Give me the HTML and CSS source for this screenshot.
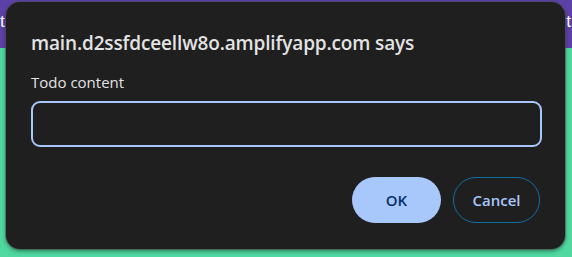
FILE: index.html
```html
<!DOCTYPE html>
<html>
<head>
<meta charset="utf-8">
<link rel="stylesheet" href="styles.css">
</head>
<body>
<div class="page">
  <header class="topbar">
    <span class="edge-text">t</span>
    <span class="edge-text edge-right">t</span>
  </header>
  <main class="content"></main>
</div>
<div class="dialog" role="dialog">
  <h1 class="title">main.d2ssfdceellw8o.amplifyapp.com says</h1>
  <label class="label" for="todo">Todo content</label>
  <input class="field" id="todo" type="text">
  <div class="actions">
    <button class="btn btn-ok">OK</button>
    <button class="btn btn-cancel">Cancel</button>
  </div>
</div>
</body>
</html>
```
FILE: styles.css
```css
* { box-sizing: border-box; }
html, body { margin: 0; padding: 0; }
body {
  width: 572px;
  height: 257px;
  overflow: hidden;
  font-family: "Open Sans", "Noto Sans", sans-serif;
  position: relative;
}
.page {
  display: flex;
  flex-direction: column;
  height: 257px;
}
.topbar {
  height: 48px;
  background: #5c41a6;
  display: flex;
  justify-content: space-between;
  align-items: center;
  color: #ffffff;
  font-family: "Liberation Sans", sans-serif;
  font-size: 17px;
}
.edge-text { line-height: 1; margin-top: -6px; }
.edge-right { margin-right: 1px; }
.content {
  flex: 1;
  background: #50d8a0;
}
.dialog {
  position: absolute;
  left: 6px;
  top: 2px;
  width: 559px;
  height: 247px;
  background: #1f1f1f;
  border-radius: 14px;
  box-shadow: 0 0 0 1px rgba(80, 80, 80, 0.55), 0 2px 4px rgba(0, 0, 0, 0.45);
  padding: 28px 24px 0 25px;
  display: flex;
  flex-direction: column;
}
.title {
  margin: 0;
  font-size: 19px;
  font-weight: 600;
  color: #e3e3e3;
  line-height: 26px;
  letter-spacing: -0.15px;
}
.label {
  margin-top: 16px;
  font-size: 15px;
  color: #e3e3e3;
  line-height: 20px;
}
.field {
  margin-top: 9px;
  width: 511px;
  height: 46px;
  border: 2px solid #a8c7fa;
  border-radius: 9px;
  background: transparent;
  outline: none;
  color: #e3e3e3;
  font: inherit;
  padding: 0 12px;
}
.actions {
  margin-top: 30px;
  display: flex;
  justify-content: flex-end;
  gap: 12px;
  padding-right: 1px;
}
.btn {
  height: 46px;
  border-radius: 23px;
  font-family: "Open Sans", "Noto Sans", sans-serif;
  font-size: 15px;
  font-weight: 600;
  cursor: pointer;
}
.btn-ok {
  width: 89px;
  background: #a8c7fa;
  color: #062e6f;
  border: none;
}
.btn-cancel {
  width: 87px;
  background: transparent;
  color: #a8c7fa;
  border: 1px solid #0f6fa3;
}
```
